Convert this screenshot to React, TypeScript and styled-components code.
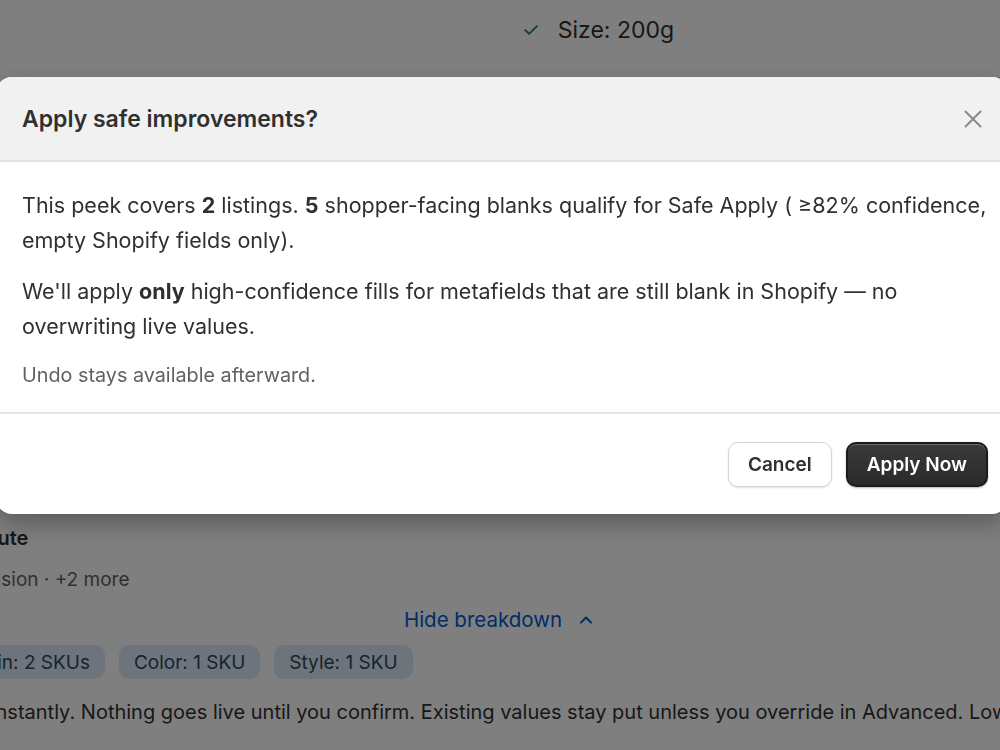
import React from "react";
import styled, { createGlobalStyle } from "styled-components";
import { ChevronUp } from "lucide-react";

const GlobalStyle = createGlobalStyle`
  html, body {
    margin: 0;
    padding: 0;
    background: #ffffff;
    overflow: hidden;
  }
  body {
    font-family: Inter, "Noto Sans", "Liberation Sans", sans-serif;
    color: #303030;
    -webkit-font-smoothing: antialiased;
  }
  * {
    box-sizing: border-box;
  }
`;

const Page = styled.div`
  width: 1112px;
  height: 750px;
  margin-left: -56px;
  padding-top: 15px;
  display: flex;
  flex-direction: column;
`;

const CheckRow = styled.div`
  display: flex;
  align-items: center;
  gap: 18px;
  padding-left: 578px;
  font-size: 23px;
  line-height: 30px;
  color: #303030;
`;

const Check = styled.span`
  color: #1a7f37;
  font-size: 20px;
`;

const AttrHeading = styled.div`
  margin-top: 478px;
  font-size: 20px;
  line-height: 30px;
  font-weight: 600;
`;

const AttrMeta = styled.div`
  margin-top: 13px;
  font-size: 19px;
  line-height: 28px;
  color: #616161;
`;

const ToggleLink = styled.button`
  align-self: center;
  margin-top: 12px;
  display: flex;
  align-items: center;
  gap: 14px;
  border: 0;
  background: none;
  padding: 0;
  font: inherit;
  font-size: 20.5px;
  line-height: 28px;
  color: #005bd3;
`;

const ChipRow = styled.div`
  margin-top: 11px;
  display: flex;
  gap: 14px;
`;

const Chip = styled.span`
  height: 34px;
  display: inline-flex;
  align-items: center;
  padding: 0 15px;
  border-radius: 10px;
  background: #dde9f6;
  color: #2c4660;
  font-size: 19px;
`;

const Note = styled.div`
  margin-top: 18px;
  margin-left: -6px;
  font-size: 20px;
  line-height: 30px;
  white-space: nowrap;
  color: #303030;
`;

const Backdrop = styled.div`
  position: fixed;
  inset: 0;
  background: rgba(0, 0, 0, 0.5);
`;

const Modal = styled.div`
  position: fixed;
  top: 77px;
  left: -4px;
  width: 1012px;
  border-radius: 16px;
  background: #ffffff;
  overflow: hidden;
  box-shadow: 0 10px 24px rgba(0, 0, 0, 0.28);
`;

const ModalHeader = styled.div`
  height: 85px;
  display: flex;
  align-items: center;
  justify-content: space-between;
  padding: 0 26px;
  background: #f1f1f1;
  border-bottom: 2px solid #e3e3e3;
`;

const Title = styled.h2`
  margin: 0;
  font-size: 23px;
  font-weight: 600;
  color: #303030;
`;

const CloseButton = styled.button`
  width: 18px;
  height: 18px;
  display: flex;
  align-items: center;
  justify-content: center;
  border: 0;
  background: none;
  padding: 0;
  color: #8a8a8a;
`;

const ModalBody = styled.div`
  padding: 26px 10px 22px 26px;
  border-bottom: 2px solid #e6e6e6;
`;

const Paragraph = styled.p`
  margin: 0 0 16px;
  font-size: 21.5px;
  line-height: 35px;
  color: #303030;

  strong {
    font-weight: 700;
  }
`;

const Hint = styled.p`
  margin: 0;
  font-size: 19.8px;
  line-height: 30px;
  color: #616161;
`;

const ModalFooter = styled.div`
  height: 100px;
  display: flex;
  align-items: center;
  justify-content: flex-end;
  gap: 14px;
  padding: 0 20px;
`;

const Button = styled.button<{ $primary?: boolean }>`
  height: 45px;
  padding: 0 19px;
  border-radius: 10px;
  font-family: inherit;
  font-size: 19px;
  font-weight: 600;
  ${({ $primary }) =>
    $primary
      ? `
    background: linear-gradient(#3a3a3a, #2a2a2a);
    color: #ffffff;
    border: 2px solid #1a1a1a;
    box-shadow: inset 0 1px 0 rgba(255, 255, 255, 0.25), 0 1px 2px rgba(0, 0, 0, 0.3);
  `
      : `
    background: #ffffff;
    color: #303030;
    border: 1px solid #d4d4d4;
    box-shadow: 0 1px 2px rgba(0, 0, 0, 0.12);
  `}
`;

export default function App() {
  return (
    <>
      <GlobalStyle />
      <Page>
        <CheckRow>
          <Check>✓</Check>
          <span>Size: 200g</span>
        </CheckRow>
        <AttrHeading>Attribute</AttrHeading>
        <AttrMeta>Dimension · +2 more</AttrMeta>
        <ToggleLink>
          Hide breakdown
          <ChevronUp size={20} strokeWidth={2.5} />
        </ToggleLink>
        <ChipRow>
          <Chip>Origin: 2 SKUs</Chip>
          <Chip>Color: 1 SKU</Chip>
          <Chip>Style: 1 SKU</Chip>
        </ChipRow>
        <Note>
          Runs instantly. Nothing goes live until you confirm. Existing values stay put unless you override in Advanced. Low-confidence fills stay as drafts.
        </Note>
      </Page>
      <Backdrop />
      <Modal role="dialog">
        <ModalHeader>
          <Title>Apply safe improvements?</Title>
          <CloseButton aria-label="Close">
            <svg width="18" height="18" viewBox="0 0 18 18" fill="none">
              <path d="M1.5 1.5L16.5 16.5M16.5 1.5L1.5 16.5" stroke="currentColor" strokeWidth="2" strokeLinecap="round" />
            </svg>
          </CloseButton>
        </ModalHeader>
        <ModalBody>
          <Paragraph>
            This peek covers <strong>2</strong> listings. <strong>5</strong> shopper-facing blanks qualify for Safe Apply ( ≥82% confidence, empty Shopify fields only).
          </Paragraph>
          <Paragraph>
            We'll apply <strong>only</strong> high-confidence fills for metafields that are still blank in Shopify — no overwriting live values.
          </Paragraph>
          <Hint>Undo stays available afterward.</Hint>
        </ModalBody>
        <ModalFooter>
          <Button>Cancel</Button>
          <Button $primary>Apply Now</Button>
        </ModalFooter>
      </Modal>
    </>
  );
}
